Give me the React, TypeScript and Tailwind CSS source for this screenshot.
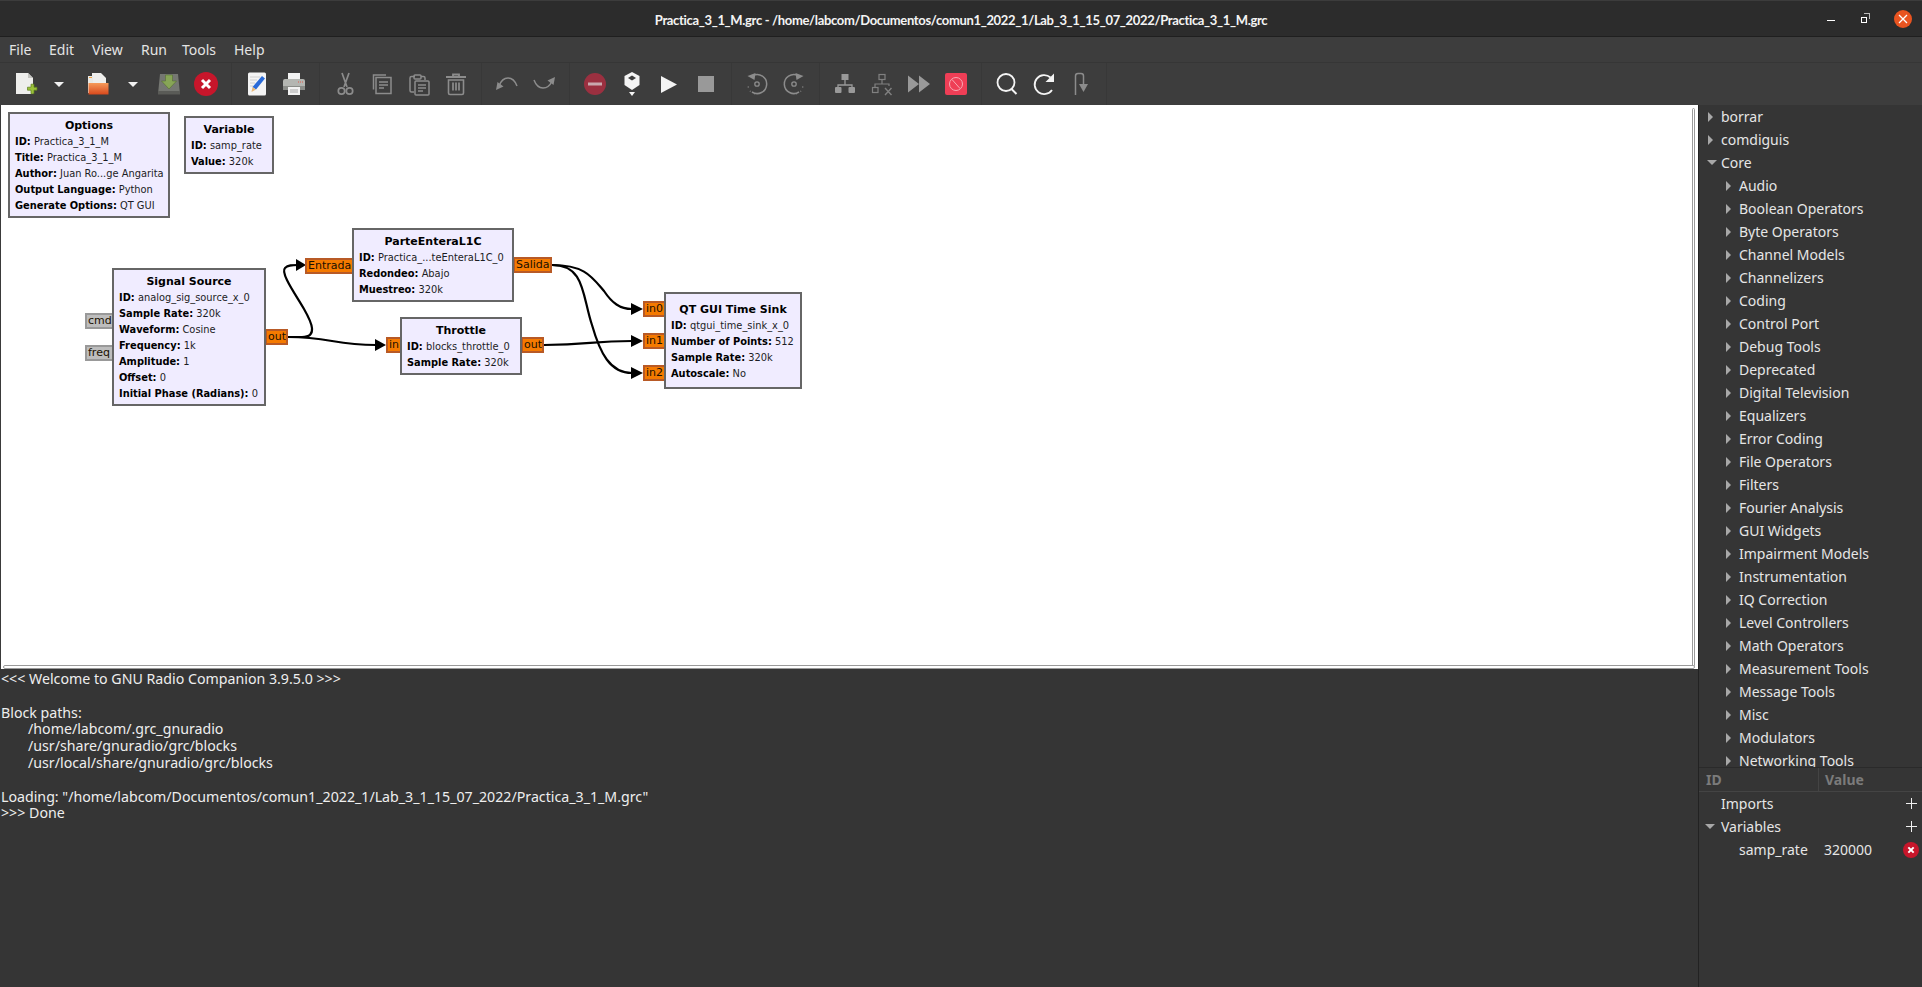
import React from "react";

type Row = { label: string; depth: number; open?: boolean };

const TREE: Row[] = [
  { label: "borrar", depth: 0 },
  { label: "comdiguis", depth: 0 },
  { label: "Core", depth: 0, open: true },
  ...[
    "Audio", "Boolean Operators", "Byte Operators", "Channel Models", "Channelizers", "Coding",
    "Control Port", "Debug Tools", "Deprecated", "Digital Television", "Equalizers", "Error Coding",
    "File Operators", "Filters", "Fourier Analysis", "GUI Widgets", "Impairment Models", "Instrumentation",
    "IQ Correction", "Level Controllers", "Math Operators", "Measurement Tools", "Message Tools", "Misc",
    "Modulators", "Networking Tools",
  ].map(label => ({ label, depth: 1 })),
];

const CONSOLE: { text: string; indent?: boolean }[] = [
  { text: "<<< Welcome to GNU Radio Companion 3.9.5.0 >>>" },
  { text: "" },
  { text: "Block paths:" },
  { text: "/home/labcom/.grc_gnuradio", indent: true },
  { text: "/usr/share/gnuradio/grc/blocks", indent: true },
  { text: "/usr/local/share/gnuradio/grc/blocks", indent: true },
  { text: "" },
  { text: 'Loading: "/home/labcom/Documentos/comun1_2022_1/Lab_3_1_15_07_2022/Practica_3_1_M.grc"' },
  { text: ">>> Done" },
];

type Block = {
  title: string;
  x: number;
  y: number;
  w: number;
  h: number;
  params: [string, string][];
};

const BLOCKS: Block[] = [
  { title: "Options", x: 8, y: 7, w: 162, h: 106, params: [["ID", "Practica_3_1_M"], ["Title", "Practica_3_1_M"], ["Author", "Juan Ro...ge Angarita"], ["Output Language", "Python"], ["Generate Options", "QT GUI"]] },
  { title: "Variable", x: 184, y: 11, w: 90, h: 58, params: [["ID", "samp_rate"], ["Value", "320k"]] },
  { title: "Signal Source", x: 112, y: 163, w: 154, h: 138, params: [["ID", "analog_sig_source_x_0"], ["Sample Rate", "320k"], ["Waveform", "Cosine"], ["Frequency", "1k"], ["Amplitude", "1"], ["Offset", "0"], ["Initial Phase (Radians)", "0"]] },
  { title: "ParteEnteraL1C", x: 352, y: 123, w: 162, h: 74, params: [["ID", "Practica_...teEnteraL1C_0"], ["Redondeo", "Abajo"], ["Muestreo", "320k"]] },
  { title: "Throttle", x: 400, y: 212, w: 122, h: 58, params: [["ID", "blocks_throttle_0"], ["Sample Rate", "320k"]] },
  { title: "QT GUI Time Sink", x: 664, y: 187, w: 138, h: 97, params: [["ID", "qtgui_time_sink_x_0"], ["Number of Points", "512"], ["Sample Rate", "320k"], ["Autoscale", "No"]] },
];

type Port = { label: string; x: number; y: number; w: number; gray?: boolean };

const PORTS: Port[] = [
  { label: "cmd", x: 85, y: 208, w: 29, gray: true },
  { label: "freq", x: 85, y: 240, w: 29, gray: true },
  { label: "out", x: 265, y: 224, w: 23 },
  { label: "Entrada", x: 305, y: 153, w: 49 },
  { label: "Salida", x: 513, y: 152, w: 39 },
  { label: "in", x: 386, y: 232, w: 16 },
  { label: "out", x: 521, y: 232, w: 23 },
  { label: "in0", x: 643, y: 196, w: 23 },
  { label: "in1", x: 643, y: 228, w: 23 },
  { label: "in2", x: 643, y: 260, w: 23 },
];

function Tool({ children, className = "w-[37px]" }: { children: React.ReactNode; className?: string }) {
  return <div className={`h-full flex items-center justify-center shrink-0 ${className}`}>{children}</div>;
}

function Sep() {
  return (
    <div className="w-[14px] h-full flex justify-center shrink-0">
      <div className="w-px h-full bg-[#383838]" />
    </div>
  );
}

function Drop() {
  return <div className="w-0 h-0 border-x-[5px] border-x-transparent border-t-[5px] border-t-[#f2f2f2]" />;
}

function Icon({ children }: { children: React.ReactNode }) {
  return (
    <svg width="24" height="24" viewBox="0 0 24 24" fill="none">
      {children}
    </svg>
  );
}

const GRAY = "#8c8c8c";

function RedX({ size = 24 }: { size?: number }) {
  return (
    <svg width={size} height={size} viewBox="0 0 24 24">
      <circle cx="12" cy="12" r="12" fill="#c7162b" />
      <path d="M8 8l8 8M16 8l-8 8" stroke="#fff" strokeWidth="3" />
    </svg>
  );
}

function Toolbar() {
  return (
    <div className="h-[42px] flex pl-[7px] bg-[#3d3d3d] shrink-0">
      <Tool>
        <Icon>
          <path d="M2 1h12l5 5v16H2z" fill="#eeeeec" />
          <path d="M14 1v5h5z" fill="#c4c4c0" />
          <path d="M15 14h3.5v-3h3v3H24.5v3h-3v3.5h-3V17H15z" transform="translate(-1.5 1.2)" fill="#9ac13a" stroke="#5d7d1c" strokeWidth="0.7" />
        </Icon>
      </Tool>
      <Tool className="w-[34px] pr-[4px]"><Drop /></Tool>
      <Tool>
        <Icon>
          <path d="M7 1h9l5 5v6H7z" fill="#eeeeec" />
          <path d="M3 4h5v17H3z" fill="#e9e9e5" />
          <path d="M4 5.5h3" stroke="#f0a040" strokeWidth="1" />
          <path d="M4 11h20v11.5H4z" transform="translate(-.5 0)" fill="url(#folder)" />
          <defs>
            <linearGradient id="folder" x1="0" y1="0" x2="0" y2="1">
              <stop offset="0" stopColor="#f59a5a" />
              <stop offset="1" stopColor="#d8481c" />
            </linearGradient>
          </defs>
        </Icon>
      </Tool>
      <Tool className="w-[35px]"><Drop /></Tool>
      <Tool>
        <Icon>
          <path d="M3 2h18l2 20H1z" fill="#757772" />
          <path d="M1 19h22v3.500H1z" fill="#5a5b57" />
          <path d="M8.500 3h7v6h4L12 17 4.500 9h4z" fill="#87a556" stroke="#566e30" strokeWidth="0.6" />
        </Icon>
      </Tool>
      <Tool><RedX /></Tool>
      <Sep />
      <Tool>
        <Icon>
          <rect x="3" y="0.5" width="18" height="23" rx="1.5" fill="#f4f4f4" />
          <path d="M5 5h10M5 8h7M5 11h5M5 14h3" stroke="#d0d0d0" strokeWidth="1" />
          <path d="M17 4l3 2.5-9 11-3.500-2.500z" fill="#2a6bd8" />
          <path d="M7.500 15l3.500 2.500-4.500 2.500z" fill="#e8b878" />
        </Icon>
      </Tool>
      <Tool>
        <Icon>
          <path d="M6 1h12v7H6z" fill="#f2f2f2" />
          <path d="M1 9q0-2 2-2h18q2 0 2 2v9H1z" fill="#b4b6b2" />
          <path d="M1 14h22v4H1z" fill="#8b8d89" />
          <path d="M16 10h1M18 10h1M20 10h1" stroke="#e05a4a" strokeWidth="1" />
          <path d="M6 15h12v8H6z" fill="#f2f2f2" />
          <path d="M8 18h8M8 20h8" stroke="#a8a8a8" strokeWidth="1" />
        </Icon>
      </Tool>
      <Sep />
      <Tool>
        <Icon>
          <path d="M9 1l5 14M16 1l-5 14" stroke={GRAY} strokeWidth="1.7" />
          <circle cx="8.5" cy="19" r="3.2" stroke={GRAY} strokeWidth="1.7" />
          <circle cx="16.5" cy="19" r="3.2" stroke={GRAY} strokeWidth="1.7" />
        </Icon>
      </Tool>
      <Tool>
        <Icon>
          <path d="M3.5 17.5V3H16" stroke={GRAY} strokeWidth="1.5" />
          <rect x="6" y="5.5" width="15" height="16" stroke={GRAY} strokeWidth="1.5" />
          <path d="M9 10h9M9 13h9M9 16h5" stroke={GRAY} strokeWidth="1.5" />
        </Icon>
      </Tool>
      <Tool>
        <Icon>
          <path d="M7 20H4.500q-1.500 0-1.500-1.500V6q0-1.500 1.500-1.500H8M14 4.500h2.500Q18 4.500 18 6v2" stroke={GRAY} strokeWidth="1.5" />
          <rect x="7" y="3" width="7" height="4" rx="1" stroke={GRAY} strokeWidth="1.5" />
          <rect x="8" y="9" width="14" height="14" rx="1" stroke={GRAY} strokeWidth="1.5" />
          <path d="M11 13h8M11 16h8M11 19h5" stroke={GRAY} strokeWidth="1.5" />
        </Icon>
      </Tool>
      <Tool>
        <Icon>
          <path d="M2 5h20M9 4.500V2.500h6v2" stroke={GRAY} strokeWidth="1.8" />
          <path d="M4.500 8h15v13q0 1.500-1.500 1.500H6Q4.500 22.500 4.500 21z" stroke={GRAY} strokeWidth="1.6" />
          <path d="M9 10.500v8M12 10.500v8M15 10.500v8" stroke={GRAY} strokeWidth="1.7" />
        </Icon>
      </Tool>
      <Sep />
      <Tool>
        <Icon>
          <path d="M4 14Q7 6 13 6q6 0 9 8" stroke={GRAY} strokeWidth="1.5" />
          <path d="M1 18l1.500-8 6 4.500z" fill={GRAY} />
        </Icon>
      </Tool>
      <Tool>
        <Icon>
          <path d="M2 8q3 8 9 8 6 0 9-7" stroke={GRAY} strokeWidth="1.5" />
          <path d="M23 5l-1.500 8-6-4.500z" fill={GRAY} />
        </Icon>
      </Tool>
      <Sep />
      <Tool>
        <svg width="22" height="22" viewBox="0 0 22 22">
          <circle cx="11" cy="11" r="11" fill="#9b3040" />
          <path d="M4 9.500h14v3H4z" fill="#c9a8ae" />
        </svg>
      </Tool>
      <Tool>
        <Icon>
          <path d="M12 0l7.500 4v9L12 18l-7.500-5V4z" fill="#f4f4f4" />
          <path d="M12 3.500l4 2.500-4 2.500L8 6z" fill="#3d3d3d" />
          <path d="M9 20h6l-3 4z" fill="#f4f4f4" />
        </Icon>
      </Tool>
      <Tool>
        <Icon>
          <path d="M4 4l16 8.500L4 21z" fill="#f4f4f4" />
        </Icon>
      </Tool>
      <Tool>
        <div className="w-[16px] h-[16px] bg-[#999999]" />
      </Tool>
      <Sep />
      <Tool>
        <Icon>
          <path d="M8 3.500a9.500 9.500 0 1 1-1 16.500" stroke={GRAY} strokeWidth="1.5" />
          <path d="M2.500 4l8-3-1 7z" fill={GRAY} />
          <circle cx="12" cy="12" r="2.2" stroke={GRAY} strokeWidth="1.3" />
          <path d="M3 14.500l.5 1M5 19l.5.500M9 21.500l1 .3" stroke={GRAY} strokeWidth="1.3" />
        </Icon>
      </Tool>
      <Tool>
        <Icon>
          <path d="M16 3.500a9.500 9.500 0 1 0 1 16.500" stroke={GRAY} strokeWidth="1.5" />
          <path d="M21.500 4l-8-3 1 7z" fill={GRAY} />
          <circle cx="12" cy="12" r="2.2" stroke={GRAY} strokeWidth="1.3" />
          <path d="M21 14.500l-.5 1M19 19l-.5.500M15 21.500l-1 .3" stroke={GRAY} strokeWidth="1.3" />
        </Icon>
      </Tool>
      <Sep />
      <Tool>
        <Icon>
          <rect x="8.5" y="2" width="7" height="6" fill="#999999" />
          <path d="M12 8v5M5 16v-3h14v3" stroke="#999999" strokeWidth="1.3" />
          <rect x="2" y="15" width="6.5" height="6" rx="1" fill="#999999" />
          <rect x="15.5" y="15" width="6.5" height="6" rx="1" fill="#999999" />
        </Icon>
      </Tool>
      <Tool>
        <Icon>
          <rect x="9" y="2.5" width="6" height="5" stroke="#808080" strokeWidth="1.2" />
          <path d="M12 8v4M5 15v-3h14v2" stroke="#808080" strokeWidth="1.2" />
          <rect x="2.5" y="15.5" width="5.5" height="5" stroke="#808080" strokeWidth="1.2" />
          <path d="M15 16l6.500 7M21.500 16L15 23" stroke="#808080" strokeWidth="1.4" />
        </Icon>
      </Tool>
      <Tool>
        <Icon>
          <path d="M1 3.500l11 8.500-11 8.500zM12 3.500L23 12l-11 8.500z" fill="#999999" />
        </Icon>
      </Tool>
      <Tool>
        <svg width="22" height="22" viewBox="0 0 22 22">
          <rect width="22" height="22" rx="2" fill="#ef3e56" />
          <circle cx="11" cy="11" r="6.5" fill="none" stroke="#f7a9b4" strokeWidth="1" />
          <path d="M7 6.500l8 9" stroke="#f7a9b4" strokeWidth="1" />
        </svg>
      </Tool>
      <Sep />
      <Tool>
        <Icon>
          <circle cx="11" cy="10.5" r="8.5" stroke="#f4f4f4" strokeWidth="1.8" />
          <path d="M16.500 17l5 5" stroke="#f4f4f4" strokeWidth="2" />
        </Icon>
      </Tool>
      <Tool>
        <Icon>
          <path d="M18.500 5.500A9.500 9.500 0 1 0 20 18" stroke="#f4f4f4" strokeWidth="1.8" />
          <path d="M22 1.500V10h-8.500z" fill="#f4f4f4" />
        </Icon>
      </Tool>
      <Tool>
        <Icon>
          <path d="M6.500 23V4q0-2.500 2.500-2.500h3q2.500 0 2.500 2.500v8" stroke={GRAY} strokeWidth="1.5" />
          <path d="M10 12h9l-4.500 8z" fill={GRAY} />
        </Icon>
      </Tool>
      <Sep />
    </div>
  );
}

function FlowBlock({ b }: { b: Block }) {
  return (
    <div
      className="absolute bg-[#f0ecff] border-2 border-[#666666] flex flex-col justify-center items-stretch pt-[2px] text-[9.85px] leading-[16px] text-[#1c1c24]"
      style={{ left: b.x, top: b.y, width: b.w, height: b.h }}
    >
      <div className="text-center text-[11px] font-bold text-black whitespace-nowrap">{b.title}</div>
      {b.params.map(([k, v]) => (
        <div key={k} className="pl-[5px] whitespace-nowrap">
          <span className="font-bold text-black">{k}:</span> {v}
        </div>
      ))}
    </div>
  );
}

function FlowPort({ p }: { p: Port }) {
  return (
    <div
      className={`absolute h-[16px] border-2 text-[11px] leading-[12px] pl-[1px] whitespace-nowrap overflow-hidden text-[#1a1000] ${
        p.gray ? "bg-[#bdbdbd] border-[#999999]" : "bg-[#f57a00] border-[#b85a26]"
      }`}
      style={{ left: p.x, top: p.y, width: p.w }}
    >
      {p.label}
    </div>
  );
}

function Canvas() {
  return (
    <div
      className="h-[564px] shrink-0 relative bg-white overflow-hidden shadow-[inset_1px_0_0_#3a3a3a]"
      style={{ fontFamily: "'DejaVu Sans', sans-serif" }}
    >
      <svg className="absolute left-0 top-0" width="1000" height="400" viewBox="0 0 1000 400" fill="none">
        <g stroke="#000" strokeWidth="2.2">
          <path d="M288 232H302C318 232 312 218 304 204C296 190 280 168 285 163C288 160 292 160 298 160" />
          <path d="M288 232C330 232 334 240 376 240" />
          <path d="M552 160C585 160 592 172 604 186C612 198 620 204 632 204" />
          <path d="M552 160C585 160 582 190 592 220C600 248 610 268 632 268" />
          <path d="M544 240C590 240 590 236 632 236" />
        </g>
        <g fill="#000">
          <path d="M296 154l10 6-10 6z" />
          <path d="M375 234l11 6-11 6z" />
          <path d="M631 198l12 6-12 6z" />
          <path d="M631 230l12 6-12 6z" />
          <path d="M631 262l12 6-12 6z" />
        </g>
      </svg>
      {PORTS.map((p, i) => <FlowPort key={i} p={p} />)}
      {BLOCKS.map(b => <FlowBlock key={b.title} b={b} />)}
      <div className="absolute right-[3px] top-[3px] bottom-[2px] w-[3px] rounded-sm border border-[#9a9a9a] bg-white" />
      <div className="absolute left-[3px] right-[3px] bottom-0 h-[4px] rounded-sm border border-[#9a9a9a] bg-white" />
    </div>
  );
}

export default function App() {
  return (
    <div
      className="h-[987px] w-[1922px] flex flex-col overflow-hidden bg-[#353535] text-[#e8e8e8] text-[15px]"
      style={{ fontFamily: "'Noto Sans', sans-serif" }}
    >
      {/* Title bar */}
      <div className="h-[37px] shrink-0 relative flex items-center justify-center bg-[#2c2c2c] border-t border-t-[#3c3c3c] border-b border-b-[#1f1f1f]">
        <span className="mt-[4px] font-bold text-[13px] tracking-[-0.33px] text-[#f4f4f4] font-['Lato']">
          Practica_3_1_M.grc - /home/labcom/Documentos/comun1_2022_1/Lab_3_1_15_07_2022/Practica_3_1_M.grc
        </span>
        <div className="absolute right-[10px] top-0 h-full flex items-center">
          <div className="w-[8px] h-[1.5px] bg-white mt-[4px] mr-[26px]" />
          <div className="relative w-[8px] h-[8px] mr-[25px]">
            <div className="absolute right-[-1px] top-[-2px] w-[6px] h-[6px] border-t border-r border-[#bbbbbb]" />
            <div className="absolute left-0 bottom-0 w-[6px] h-[6px] border border-white" />
          </div>
          <div className="w-[18px] h-[18px] rounded-full bg-[#e95420] flex items-center justify-center">
            <svg width="10" height="10" viewBox="0 0 10 10">
              <path d="M1 1l8 8M9 1l-8 8" stroke="#fff" strokeWidth="1.3" />
            </svg>
          </div>
        </div>
      </div>

      {/* Menu */}
      <div className="h-[26px] shrink-0 flex items-center pl-[9px] bg-[#3d3d3d] border-b border-b-[#363636] text-[#e4e4e4] text-[14px]">
        <span className="w-[40px]">File</span>
        <span className="w-[43px]">Edit</span>
        <span className="w-[49px]">View</span>
        <span className="w-[41px]">Run</span>
        <span className="w-[52px]">Tools</span>
        <span>Help</span>
      </div>

      <Toolbar />

      <div className="flex-1 flex min-h-0">
        <div className="w-[1698px] flex flex-col shrink-0">
          <Canvas />
          <div className="flex-1 pt-[2px] text-[14.2px] leading-[16.8px] text-[#eeeeee] pl-px overflow-hidden">
            {CONSOLE.map((l, i) => (
              <div key={i} className={`h-[16.8px] whitespace-nowrap ${l.indent ? "pl-[27px]" : ""}`}>{l.text}</div>
            ))}
          </div>
        </div>

        {/* Right panel */}
        <div className="flex-1 flex flex-col border-l border-l-[#222222] text-[14px] text-[#e6e6e6] min-w-0">
          <div className="h-[662px] shrink-0 overflow-hidden">
            {TREE.map(r => (
              <div key={r.label} className={`h-[23px] flex items-center ${r.depth ? "pl-[26px]" : "pl-[8px]"}`}>
                <div className="w-[14px] flex justify-start items-center shrink-0">
                  {r.open ? (
                    <div className="w-0 h-0 border-x-[5px] border-x-transparent border-t-[5px] border-t-[#a8a8a8]" />
                  ) : (
                    <div className="ml-[1px] w-0 h-0 border-y-[5px] border-y-transparent border-l-[5px] border-l-[#a8a8a8]" />
                  )}
                </div>
                <span className="whitespace-nowrap">{r.label}</span>
              </div>
            ))}
          </div>
          <div className="h-[25px] shrink-0 flex items-center border-t border-t-[#2a2a2a] border-b border-b-[#444444] font-bold text-[#7b7b7b]">
            <div className="w-[120px] h-full pl-[7px] flex items-center border-r border-r-[#444444]">ID</div>
            <div className="pl-[6px]">Value</div>
          </div>
          <div>
            <div className="h-[23px] flex items-center pl-[22px] pr-[5px]">
              <span>Imports</span>
              <svg className="ml-auto" width="11" height="11" viewBox="0 0 11 11"><path d="M5.5 0v11M0 5.500h11" stroke="#f0f0f0" strokeWidth="1" /></svg>
            </div>
            <div className="h-[23px] flex items-center pl-[6px] pr-[5px]">
              <div className="w-[16px] shrink-0">
                <div className="w-0 h-0 border-x-[5px] border-x-transparent border-t-[5px] border-t-[#a8a8a8]" />
              </div>
              <span>Variables</span>
              <svg className="ml-auto" width="11" height="11" viewBox="0 0 11 11"><path d="M5.5 0v11M0 5.500h11" stroke="#f0f0f0" strokeWidth="1" /></svg>
            </div>
            <div className="h-[23px] flex items-center pl-[40px] pr-[3px]">
              <span className="w-[85px]">samp_rate</span>
              <span>320000</span>
              <span className="ml-auto flex"><RedX size={16} /></span>
            </div>
          </div>
        </div>
      </div>
    </div>
  );
}
